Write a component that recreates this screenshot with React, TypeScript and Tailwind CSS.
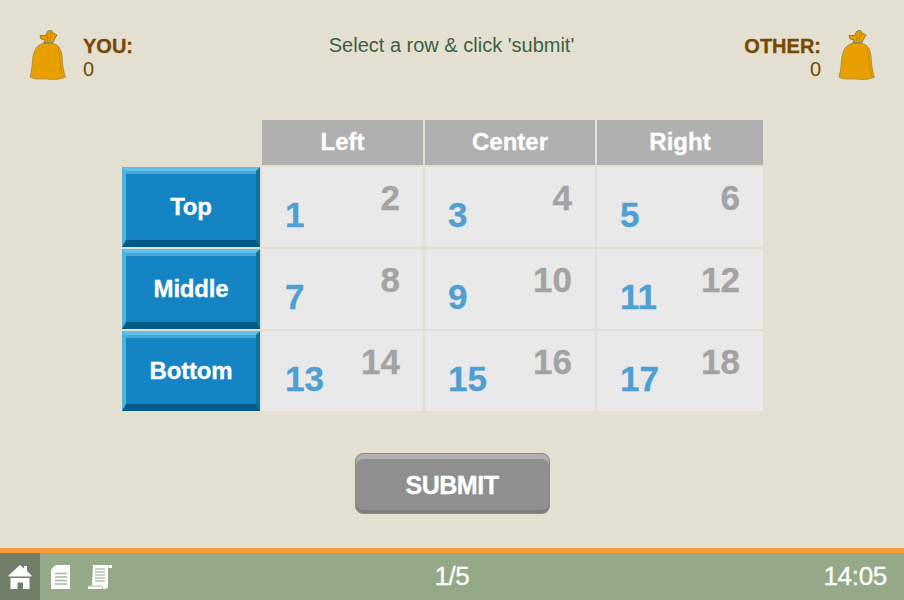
const FONT = "font-['Liberation_Sans',Arial,sans-serif]";

function Bag() {
  return (
    <svg width="38" height="52" viewBox="0 0 38 52">
      <path d="M12 5.5 L17.5 5.5 L20 1 L23.5 0.5 L25 3 L29 5 L26.5 9 L25 12.5 L16 12.5 L17 9.5 L13 9 Z" fill="#e8a000" stroke="#8f6a10" strokeWidth="0.8" />
      <path d="M19 5 L20 11 M23 2 L22 11" stroke="#a87508" strokeWidth="0.7" fill="none" />
      <path d="M15 13.5 L25 13.5 C31 15 33 19 34 26 C34.5 33 35 41 37.5 47 C31 50 24 49.5 19 49 C12 48.5 7 50 2 47 C4 41 4 34 5 27 C6 20 9 15 15 13.5 Z" fill="#e8a000" stroke="#a98a3a" strokeWidth="0.9" />
      <path d="M15 13 L25 13" stroke="#8f8a70" strokeWidth="1.4" />
      <path d="M30 19 C33 27 31 38 35 46" stroke="#b47f08" strokeWidth="0.7" fill="none" />
    </svg>
  );
}

function HomeIcon() {
  return (
    <svg width="24" height="26" viewBox="0 0 24 26" fill="#fff">
      <path d="M12 1 L16 4.5 L16 2 L19 2 L19 7 L23.5 11.5 L23.5 12.5 L0.5 12.5 L0.5 11.5 Z" />
      <path d="M2.5 14 L21.5 14 L21.5 25 L15 25 L15 18.5 L9.5 18.5 L9.5 25 L2.5 25 Z" />
    </svg>
  );
}

function DocIcon() {
  return (
    <svg width="20" height="24" viewBox="0 0 20 24">
      <path d="M6 0 L19 0 Q20 0 20 1 L20 23 Q20 24 19 24 L2 24 Q1 24 1 23 L1 6 Z" fill="#fff" />
      <path d="M5 0.5 L5 5 L0.5 5 Z" fill="#fff" />
      <path d="M5 8.5 H17 M5 12 H17 M5 15.5 H17 M5 19 H17" stroke="#a8b89c" strokeWidth="1.4" />
    </svg>
  );
}

function ScrollIcon() {
  return (
    <svg width="26" height="26" viewBox="0 0 26 26">
      <path d="M6 1 L22 1 L21 5 L21 22 Q21 25 18 25 L1 25 L1 22 L5 21 Z" fill="#fff" />
      <path d="M22 1 L25 1 L25 4 L22 4 Z" fill="#fff" />
      <path d="M8 5 H18 M8 8 H18 M8 11 H18 M8 14 H18 M8 17 H18" stroke="#95a888" strokeWidth="1.2" />
      <path d="M1 22 L15 22 L16 25" stroke="#95a888" strokeWidth="0.8" fill="none" />
    </svg>
  );
}

function Head({ label }: { label: string }) {
  return (
    <div className="flex items-center justify-center bg-[#b0b0b0] pb-[2px] text-[24px] font-bold text-white [-webkit-text-stroke:0.3px]">
      {label}
    </div>
  );
}

function RowButton({ label }: { label: string }) {
  return (
    <div className="flex items-center justify-center border-t-[4px] border-r-[4px] border-b-[7px] border-l-[4px] border-t-[#5cc0e8] border-r-[#12709c] border-b-[#005a88] border-l-[#4fb4dc] bg-[#1484c4] pt-[3px] text-[24px] font-bold tracking-[-0.2px] text-white shadow-[inset_0_3px_0_#46a8d8] [-webkit-text-stroke:0.3px]">
      <span>{label}</span>
    </div>
  );
}

function Cell({ a, b }: { a: number; b: number }) {
  return (
    <div className="flex justify-between bg-[#e9e9e9] px-[23px] text-[35px] font-bold leading-none [-webkit-text-stroke:0.3px]">
      <span className="mt-[29.5px] text-[#4f9fd2]">{a}</span>
      <span className="mt-[12.5px] text-[#a3a3a3]">{b}</span>
    </div>
  );
}

export default function App() {
  const rows = [
    { label: "Top", nums: [[1, 2], [3, 4], [5, 6]] },
    { label: "Middle", nums: [[7, 8], [9, 10], [11, 12]] },
    { label: "Bottom", nums: [[13, 14], [15, 16], [17, 18]] },
  ];
  return (
    <div className={`${FONT} flex h-[600px] w-[904px] flex-col bg-[#e3e0d2]`}>
      <div className="flex h-[120px] items-start justify-between pt-[30px] pr-[29px] pl-[28px]">
        <div className="flex w-[200px] gap-[17px]">
          <Bag />
          <div className="pt-[5px] text-[20px] leading-[23px] text-[#784800]">
            <div className="font-bold [-webkit-text-stroke:0.3px]">YOU:</div>
            <div>0</div>
          </div>
        </div>
        <div className="pt-[4px] text-[20px] leading-[22px] text-[#3d6042]">Select a row &amp; click 'submit'</div>
        <div className="flex w-[200px] justify-end gap-[16px]">
          <div className="pt-[5px] text-right text-[20px] leading-[23px] text-[#784800]">
            <div className="font-bold [-webkit-text-stroke:0.3px]">OTHER:</div>
            <div>0</div>
          </div>
          <Bag />
        </div>
      </div>

      <div className="ml-[122px] grid w-[641px] grid-cols-[138px_161px_170px_166px] grid-rows-[45px_80px_80px_80px] gap-[2px]">
        <div />
        <Head label="Left" />
        <Head label="Center" />
        <Head label="Right" />
        {rows.map((r) => (
          <div key={r.label} className="contents">
            <RowButton label={r.label} />
            {r.nums.map(([a, b]) => (
              <Cell key={a} a={a} b={b} />
            ))}
          </div>
        ))}
      </div>

      <div className="mt-[42px] flex justify-center">
        <div className="flex h-[61px] w-[195px] items-center justify-center rounded-[8px] border border-[#8a8a8a] bg-[#8f8f8f] pt-[5px] text-[25px] font-bold tracking-[-0.5px] text-white shadow-[inset_0_5px_0_#b0b0b0,inset_0_-3px_0_#7e7e7e] [-webkit-text-stroke:0.3px]">
          SUBMIT
        </div>
      </div>

      <div className="mt-auto border-t-[5px] border-t-[#f69a3a]">
        <div className="grid h-[47px] grid-cols-3 items-center bg-[#95a888] text-white">
          <div className="flex h-full items-center">
            <div className="flex h-full w-[40px] items-center justify-center bg-[#717f68]">
              <HomeIcon />
            </div>
            <div className="ml-[10px] flex items-center gap-[17px]">
              <DocIcon />
              <ScrollIcon />
            </div>
          </div>
          <div className="text-center text-[26px] tracking-[-0.5px] [-webkit-text-stroke:0.3px]">1/5</div>
          <div className="pr-[17px] text-right text-[26px] tracking-[-0.3px] [-webkit-text-stroke:0.3px]">14:05</div>
        </div>
      </div>
    </div>
  );
}
